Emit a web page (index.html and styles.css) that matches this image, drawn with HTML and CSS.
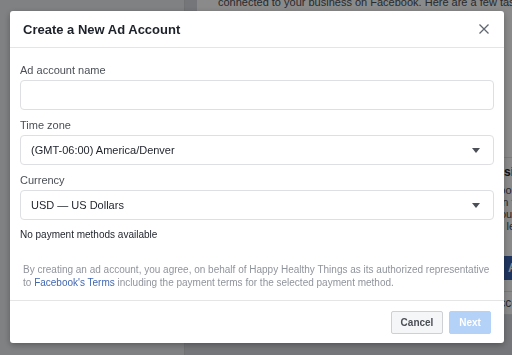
FILE: index.html
```html
<!DOCTYPE html>
<html lang="en">
<head>
<meta charset="utf-8">
<title>Create a New Ad Account</title>
<link rel="stylesheet" href="styles.css">
</head>
<body>
<div class="page">
  <aside class="sidebar"></aside>
  <main class="content">
    <section class="card intro">
      <p class="intro-text">Your Business Manager account has been created. These are the first things that are</p>
      <p class="intro-text">connected to your business on Facebook. Here are a few tasks to get started with your account</p>
    </section>
    <section class="card tasks">
      <h3 class="task-title">Add people to your business and assign permissions</h3>
      <p class="task-text">Give people access to your Facebook Pages, ad accounts and the other web</p>
      <p class="task-text">assets they need to work on. Assign the roles they should have on the</p>
      <p class="task-text">asset, or give them full control of your Business Manager or c</p>
      <p class="task-text">account. We recommend adding at least one more admin to your business.</p>
      <div class="task-actions"><span class="task-btn">Add People</span></div>
      <div class="task-row">Add accounts and assets</div>
    </section>
  </main>
</div>
<div class="overlay"></div>

<div class="modal" role="dialog" aria-labelledby="modal-title">
  <header class="modal-header">
    <h2 class="modal-title" id="modal-title">Create a New Ad Account</h2>
    <button class="close-btn" aria-label="Close">
      <svg width="10" height="10" viewBox="0 0 10 10"><path d="M0.5 0.5 L9.5 9.5 M9.5 0.5 L0.5 9.5" stroke="#606770" stroke-width="1.3" fill="none"/></svg>
    </button>
  </header>
  <div class="modal-body">
    <div class="field">
      <label class="field-label">Ad account name</label>
      <div class="input"></div>
    </div>
    <div class="field">
      <label class="field-label">Time zone</label>
      <div class="input select"><span>(GMT-06:00) America/Denver</span><span class="caret"></span></div>
    </div>
    <div class="field">
      <label class="field-label">Currency</label>
      <div class="input select"><span>USD — US Dollars</span><span class="caret"></span></div>
    </div>
    <p class="note">No payment methods available</p>
    <p class="disclaimer">By creating an ad account, you agree, on behalf of Happy Healthy Things as its authorized representative to <a href="#">Facebook's Terms</a> including the payment terms for the selected payment method.</p>
  </div>
  <footer class="modal-footer">
    <button class="btn btn-cancel">Cancel</button>
    <button class="btn btn-next">Next</button>
  </footer>
</div>
</body>
</html>
```
FILE: styles.css
```css
* { box-sizing: border-box; }
html, body { margin: 0; padding: 0; }
body {
  width: 512px;
  height: 355px;
  overflow: hidden;
  font-family: "Liberation Sans", Arial, sans-serif;
  background: #dfe1e5;
}

.page {
  display: grid;
  grid-template-columns: 185px 1fr;
  height: 355px;
}
.sidebar {
  background: #eceef1;
  border-right: 1px solid #cfd2d6;
}
.content {
  background: #d8dadf;
  overflow: hidden;
  padding-left: 12px;
}
.card {
  background: #fff;
  white-space: nowrap;
}
.intro {
  margin-top: -20px;
  padding: 0 0 0 21px;
  height: 177px;
}
.intro-text {
  margin: 0;
  font-size: 11px;
  line-height: 15px;
  color: #4b4f56;
}
.tasks {
  margin-top: 0;
  padding: 6px 0 0 21px;
  height: 158px;
  border-top: 1px solid #e5e5e5;
}
.task-title {
  margin: 0 0 4px 80px;
  font-size: 12px;
  line-height: 16px;
  font-weight: bold;
  color: #1d2129;
}
.task-text {
  margin: 0 0 0 115px;
  font-size: 11px;
  line-height: 12px;
  color: #4b4f56;
}
.task-actions {
  margin: 24px 0 0 200px;
}
.task-btn {
  display: inline-block;
  background: #3b62ae;
  color: #fff;
  font-size: 12px;
  font-weight: bold;
  line-height: 24px;
  padding: 0 90px;
}
.task-row {
  margin-top: 11px;
  border-top: 1px solid #dddfe2;
  border-bottom: 1px solid #dddfe2;
  padding-left: 250px;
  font-size: 12px;
  line-height: 22px;
  color: #4b4f56;
}

.overlay {
  position: fixed;
  inset: 0;
  background: rgba(0, 0, 0, 0.46);
}

.modal {
  position: fixed;
  left: 10px;
  top: 11px;
  width: 494px;
  height: 332px;
  background: #fff;
  border-radius: 3px;
  box-shadow: 0 2px 6px rgba(0, 0, 0, 0.3);
  display: flex;
  flex-direction: column;
}
.modal-header {
  height: 37px;
  border-bottom: 1px solid #e5e5e5;
  display: flex;
  align-items: center;
  justify-content: space-between;
  padding: 0 15px 0 13px;
}
.modal-title {
  margin: 0;
  font-size: 13px;
  font-weight: bold;
  color: #1d2129;
}
.close-btn {
  border: 0;
  background: none;
  padding: 0;
  width: 10px;
  height: 10px;
  display: flex;
}

.modal-body {
  flex: 1;
  padding: 15px 10px 0 10px;
}
.field { margin-bottom: 8px; }
.field-label {
  display: block;
  font-size: 11px;
  line-height: 14px;
  color: #4b4f56;
  margin-bottom: 3px;
}
.input {
  height: 30px;
  border: 1px solid #dddfe2;
  border-radius: 4px;
  background: #fff;
}
.select {
  display: flex;
  align-items: center;
  justify-content: space-between;
  padding: 0 13px 0 10px;
  font-size: 11px;
  color: #1d2129;
}
.caret {
  width: 0;
  height: 0;
  border-left: 4.5px solid transparent;
  border-right: 4.5px solid transparent;
  border-top: 5px solid #4b4f56;
}
.note {
  margin: 7px 0 0 0;
  font-size: 10px;
  line-height: 13px;
  color: #1d2129;
}
.disclaimer {
  margin: 22px 0 0 3px;
  font-size: 10px;
  line-height: 13px;
  color: #90949c;
}
.disclaimer a {
  color: #4267b2;
  text-decoration: none;
}

.modal-footer {
  border-top: 1px solid #e5e5e5;
  height: 43px;
  display: flex;
  align-items: center;
  justify-content: flex-end;
  gap: 6px;
  padding: 0 13px 0 0;
}
.btn {
  height: 23px;
  border-radius: 2px;
  font-family: "Liberation Sans", Arial, sans-serif;
  font-size: 10px;
  font-weight: bold;
  padding: 0;
}
.btn-cancel {
  width: 52px;
  background: #f5f6f7;
  border: 1px solid #ced0d4;
  color: #4b4f56;
}
.btn-next {
  width: 42px;
  background: #b4d1f8;
  border: 1px solid #b4d1f8;
  color: #fff;
}
```
